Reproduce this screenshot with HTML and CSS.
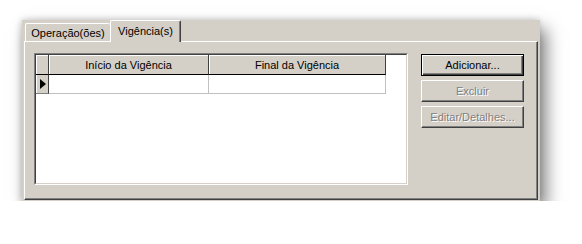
FILE: index.html
```html
<!DOCTYPE html>
<html lang="pt-br">
<head>
    <meta charset="UTF-8">
    <title>Vigência(s)</title>
    <link rel="stylesheet" href="styles.css">
</head>
<body>
    <div class="janela">
        <div class="abas">
            <div class="aba aba-um">Operação(ões)</div>
            <div class="aba aba-ativa">Vigência(s)</div>
        </div>
        <div class="pagina">
            <div class="grade">
                <div class="grade-interna">
                    <div class="linha cabecalho">
                        <div class="celula fixa"></div>
                        <div class="celula fixa">Início da Vigência</div>
                        <div class="celula fixa">Final da Vigência</div>
                    </div>
                    <div class="linha">
                        <div class="celula indicador"><span class="seta"></span></div>
                        <div class="celula dado"></div>
                        <div class="celula dado"></div>
                    </div>
                </div>
            </div>
            <div class="botoes">
                <button class="botao botao-padrao">Adicionar...</button>
                <button class="botao" disabled>Excluir</button>
                <button class="botao" disabled>Editar/Detalhes...</button>
            </div>
        </div>
    </div>
</body>
</html>
```

FILE: styles.css
```css
body {
    margin: 0;
    background-color: #fff;
    font-family: "Liberation Sans", Arial, sans-serif;
    font-size: 11px;
    color: #000;
}
.janela {
    margin: 20px 0 0 22px;
    width: 518px;
    height: 181px;
    box-sizing: border-box;
    padding: 0 2px 1px 2px;
    background-color: #d4d0c8;
    display: flex;
    flex-direction: column;
    box-shadow: 6px 9px 16px rgba(0, 0, 0, 0.5), -2px 0 6px rgba(0, 0, 0, 0.12), 0 -2px 6px rgba(0, 0, 0, 0.06);
}
.abas {
    height: 21px;
    display: flex;
    align-items: flex-end;
    padding-left: 1px;
}
.aba {
    box-sizing: border-box;
    display: flex;
    align-items: center;
    justify-content: center;
    background-color: #d4d0c8;
    border-top: 1px solid #fff;
    border-left: 1px solid #fff;
    border-right: 1px solid #404040;
    border-radius: 2px 2px 0 0;
    box-shadow: inset -1px 0 #808080;
}
.aba-um {
    width: 85px;
    height: 18px;
    padding-top: 1px;
    border-right: none;
    box-shadow: none;
}
.aba-ativa {
    width: 71px;
    height: 22px;
    margin-bottom: -1px;
    padding-bottom: 2px;
    position: relative;
    z-index: 1;
}
.pagina {
    flex: 1;
    display: flex;
    gap: 13px;
    padding: 11px 13px 0 9px;
    border: 1px solid;
    border-color: #fff #404040 #404040 #fff;
    box-shadow: inset -1px -1px #808080;
}
.grade {
    width: 374px;
    height: 132px;
    box-sizing: border-box;
    border: 1px solid;
    border-color: #808080 #fff #fff #808080;
}
.grade-interna {
    height: 100%;
    box-sizing: border-box;
    border: 1px solid;
    border-color: #404040 #d4d0c8 #d4d0c8 #404040;
    background-color: #fff;
}
.linha {
    display: grid;
    grid-template-columns: 13px 160px 177px;
    height: 19px;
}
.cabecalho {
    height: 20px;
}
.celula {
    box-sizing: border-box;
    display: flex;
    align-items: center;
    justify-content: center;
}
.fixa {
    background-color: #d4d0c8;
    border-right: 1px solid #404040;
    border-bottom: 1px solid #000;
    box-shadow: inset 1px 1px #fff;
    padding-top: 1px;
}
.indicador {
    background-color: #d4d0c8;
    border-right: 1px solid #404040;
    border-bottom: 1px solid #808080;
    box-shadow: inset 1px 0 #fff;
    justify-content: flex-start;
    padding-left: 4px;
}
.seta {
    width: 0;
    height: 0;
    border-top: 5px solid transparent;
    border-bottom: 5px solid transparent;
    border-left: 6px solid #000;
}
.dado {
    border-right: 1px solid #c0c0c0;
    border-bottom: 1px solid #c0c0c0;
}
.botoes {
    display: flex;
    flex-direction: column;
    gap: 4px;
    padding-top: 1px;
}
.botao {
    width: 103px;
    height: 22px;
    margin: 0;
    padding: 0;
    font-family: inherit;
    font-size: 11px;
    color: #000;
    background-color: #d4d0c8;
    border: 1px solid;
    border-color: #fff #404040 #404040 #fff;
    box-shadow: inset -1px -1px #808080;
}
.botao-padrao {
    border-color: #000;
    box-shadow: inset 1px 1px #fff, inset -1px -1px #404040, inset -2px -2px #808080;
}
.botao:disabled {
    color: #808080;
    text-shadow: 1px 1px #fff;
}
```
